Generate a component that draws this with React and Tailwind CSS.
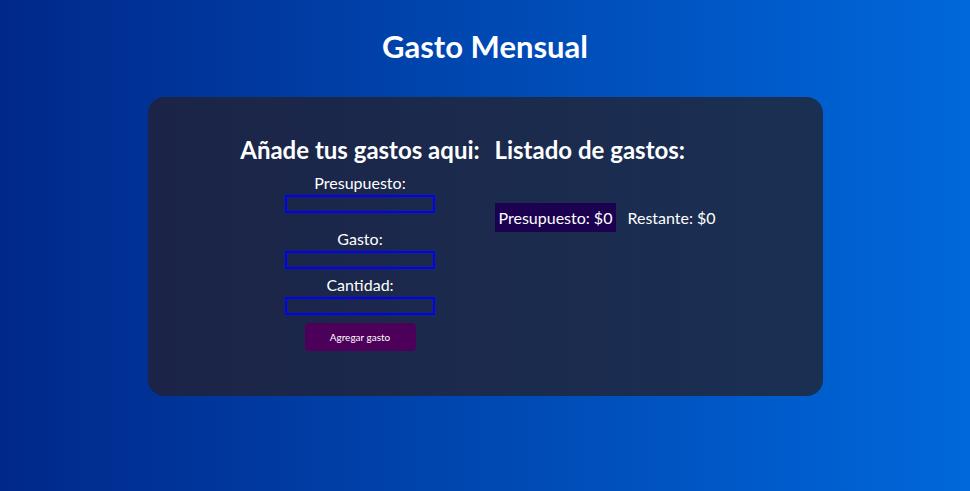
const App = () => {
  return (
    <div
      className="min-h-[491px] w-full bg-gradient-to-r from-[#00288a] to-[#0068db] pt-[25px] text-white"
      style={{ fontFamily: "Lato, 'Noto Sans', sans-serif" }}
    >
      <h1 className="text-center text-[31px] font-bold leading-[42px]">Gasto Mensual</h1>

      <div className="mx-auto mt-[30px] flex h-[299px] w-[675px] gap-[15px] rounded-[16px] bg-gradient-to-r from-[#1b2447] to-[#1a3053] pl-[93px] pt-[37px]">
        {/* Formulario */}
        <div className="flex w-[239px] shrink-0 flex-col items-center">
          <h2 className="whitespace-nowrap text-[24px] font-bold leading-[32px]">Añade tus gastos aqui:</h2>

          <label className="mt-[5px] text-[16px] leading-[24px]">Presupuesto:</label>
          <input className="h-[18px] w-[150px] border-2 border-[#0000ff] bg-transparent outline-none" />

          <label className="mt-[14px] text-[16px] leading-[24px]">Gasto:</label>
          <input className="h-[18px] w-[150px] border-2 border-[#0000ff] bg-transparent outline-none" />

          <label className="mt-[4px] text-[16px] leading-[24px]">Cantidad:</label>
          <input className="h-[18px] w-[150px] border-2 border-[#0000ff] bg-transparent outline-none" />

          <button className="mt-[8px] h-[28px] w-[111px] rounded-[4px] bg-[#4c005a] text-[10px] text-white">
            Agregar gasto
          </button>
        </div>

        {/* Listado */}
        <div className="flex flex-col">
          <h2 className="whitespace-nowrap text-[24px] font-bold leading-[32px]">Listado de gastos:</h2>
          <div className="mt-[37px] flex items-center gap-[11px] text-[16px]">
            <span className="bg-[#1b0150] px-[4px] py-[3px] leading-[23px]">Presupuesto: $0</span>
            <span className="leading-[23px]">Restante: $0</span>
          </div>
        </div>
      </div>
    </div>
  );
};

export default App;
